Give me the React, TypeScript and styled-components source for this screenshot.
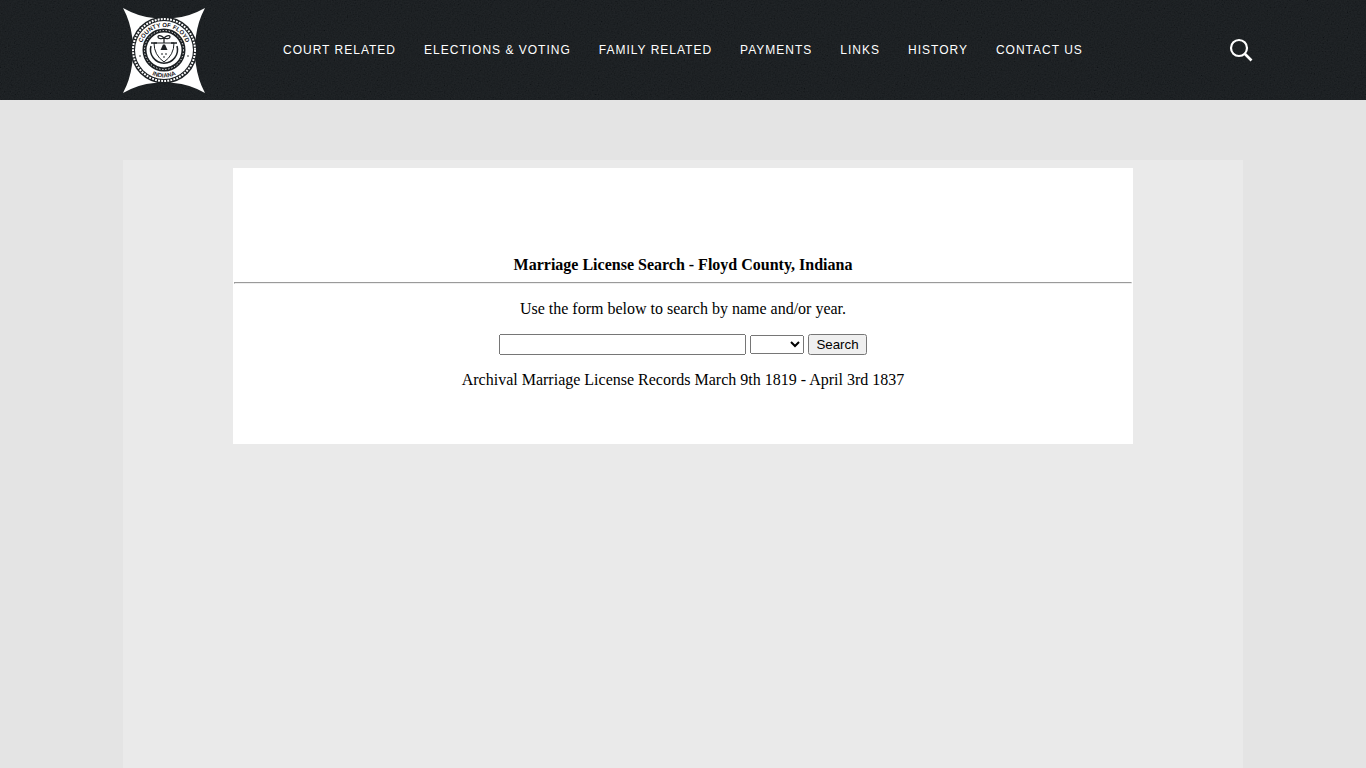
import React from 'react';
import styled, { createGlobalStyle } from 'styled-components';

const GlobalStyle = createGlobalStyle`
  *, *::before, *::after { box-sizing: border-box; }
  body {
    margin: 0;
    background: #e4e4e4;
    color: #000;
    font-family: "Liberation Serif", "Times New Roman", serif;
  }
`;

const Page = styled.div`
  display: flex;
  flex-direction: column;
  min-height: 100vh;
`;

const Header = styled.header`
  position: relative;
  background: #111518;
`;

const Grain = styled.svg`
  position: absolute;
  inset: 0;
  width: 100%;
  height: 100%;
  opacity: 0.07;
  pointer-events: none;
`;

const HeaderInner = styled.div`
  position: relative;
  display: flex;
  align-items: center;
  width: 100%;
  max-width: 1136px;
  height: 100px;
  margin: 0 auto;
  padding: 0 8px;
`;

const HomeLink = styled.a`
  display: block;
  flex: none;
  width: 82px;
  height: 86px;
  margin-right: 78px;

  svg { display: block; }
`;

const Nav = styled.nav`
  display: flex;
  gap: 28px;
  flex: 1;
`;

const NavLink = styled.a`
  color: #fff;
  font: 12px/16px "Liberation Sans", Arial, sans-serif;
  letter-spacing: 1px;
  text-transform: uppercase;
  text-decoration: none;
  white-space: nowrap;
`;

const SearchToggle = styled.button`
  display: flex;
  align-items: center;
  justify-content: center;
  width: 40px;
  height: 40px;
  margin-right: -18px;
  padding: 0;
  border: 0;
  background: none;
  color: #fff;
  cursor: pointer;
`;

const Main = styled.main`
  display: flex;
  flex: 1;
  width: 100%;
  max-width: 1120px;
  margin: 60px auto 0;
  padding: 8px;
  align-items: flex-start;
  justify-content: center;
  background: #eaeaea;
`;

const Card = styled.section`
  width: 100%;
  max-width: 900px;
  padding: 88px 1px 55px;
  background: #fff;
  text-align: center;
  font-size: 16px;
  line-height: 18px;
`;

const Title = styled.h1`
  margin: 0;
  font-size: 16px;
  line-height: 18px;
`;

const Rule = styled.hr`
  margin: 8px 0 16px;
`;

const Text = styled.p`
  margin: 0;
`;

const SearchForm = styled.form`
  display: flex;
  align-items: center;
  justify-content: center;
  gap: 4px;
  margin: 16px 0;
`;

const NameInput = styled.input`
  width: 247px;
  height: 21px;
`;

const YearSelect = styled.select`
  width: 54px;
  height: 19px;
`;

const SubmitButton = styled.button`
  height: 21px;
  padding: 1px 6px;
`;

const SealText = styled.text`
  font-family: "Liberation Sans", Arial, sans-serif;
  font-weight: 700;
  font-size: 6px;
  fill: #1c2023;
  text-anchor: middle;
`;

const links = [
  'Court Related',
  'Elections & Voting',
  'Family Related',
  'Payments',
  'Links',
  'History',
  'Contact Us',
];

const years = Array.from({ length: 19 }, (_, i) => 1819 + i);

function CountySeal() {
  return (
    <svg width="82" height="86" viewBox="0 0 82 86" fill="none">
      <path d="M0 1Q16 10 31 11Q41 12 51 11Q66 10 82 1Q75 14 73 29Q70 43 73 58Q75 73 82 86Q66 77 51 76Q41 75 31 76Q16 77 0 86Q7 73 9 58Q12 43 9 29Q7 14 0 1Z" fill="#fff" />
      <circle cx="41" cy="43" r="33.5" fill="#1c2023" />
      <circle cx="41" cy="43" r="31" stroke="#fff" strokeWidth="2" strokeDasharray="1.9 1.2" />
      <circle cx="41" cy="43" r="29" fill="#fff" />
      <circle cx="41" cy="43" r="19.5" stroke="#1c2023" strokeWidth="4" />
      <circle cx="41" cy="43" r="19.5" stroke="#fff" strokeWidth="1" strokeDasharray="1.3 1.8" />
      <path d="M28 39A13.5 13.5 0 1 0 54 39" stroke="#1c2023" strokeWidth="1.5" />
      <path d="M31 36H51Q51 48 41 55Q31 48 31 36Z" fill="#fff" stroke="#1c2023" strokeWidth="1" />
      <path d="M28 36H34M48 36H54" stroke="#1c2023" strokeWidth="1.5" />
      <path d="M41 31C38 28 35 28 35 30C35 32 39 32 41 31C43 32 47 32 47 30C47 28 44 28 41 31V36" stroke="#1c2023" strokeWidth="1.3" />
      <path d="M37.5 43L40 37.5H42L44.5 43Z" fill="#1c2023" />
      <path d="M38 47H40M42 47H44M40 50H42" stroke="#1c2023" strokeWidth="1" />
      <circle cx="17" cy="49" r="0.8" fill="#1c2023" />
      <circle cx="65" cy="49" r="0.8" fill="#1c2023" />
      <path id="seal-top" d="M18 43A23 23 0 0 1 64 43" />
      <path id="seal-bottom" d="M13.5 43A27.5 27.5 0 0 0 68.5 43" />
      <SealText>
        <textPath href="#seal-top" startOffset="50%">COUNTY OF FLOYD</textPath>
      </SealText>
      <SealText>
        <textPath href="#seal-bottom" startOffset="50%">INDIANA</textPath>
      </SealText>
    </svg>
  );
}

export default function App() {
  return (
    <Page>
      <GlobalStyle />
      <Header>
        <Grain aria-hidden="true">
          <filter id="grain">
            <feTurbulence type="fractalNoise" baseFrequency="0.7" numOctaves="2" />
            <feColorMatrix type="matrix" values="0.9 0.9 0 0 -0.4  0.9 0.9 0 0 -0.4  0.9 0.9 0 0 -0.4  0 0 0 0 1" />
          </filter>
          <rect width="100%" height="100%" filter="url(#grain)" />
        </Grain>
        <HeaderInner>
          <HomeLink href="#" aria-label="Floyd County home">
            <CountySeal />
          </HomeLink>
          <Nav>
            {links.map((label) => (
              <NavLink key={label} href="#">{label}</NavLink>
            ))}
          </Nav>
          <SearchToggle type="button" aria-label="Search site">
            <svg width="24" height="24" viewBox="0 0 24 24" fill="none" stroke="currentColor">
              <circle cx="10" cy="10" r="8" strokeWidth="2.2" />
              <path d="M16 16L22.5 22.5" strokeWidth="2.6" />
            </svg>
          </SearchToggle>
        </HeaderInner>
      </Header>
      <Main>
        <Card>
          <Title>Marriage License Search - Floyd County, Indiana</Title>
          <Rule />
          <Text>Use the form below to search by name and/or year.</Text>
          <SearchForm onSubmit={(event) => event.preventDefault()}>
            <NameInput type="text" name="name" aria-label="Name" />
            <YearSelect name="year" aria-label="Year" defaultValue="">
              <option value="" />
              {years.map((year) => (
                <option key={year} value={year}>{year}</option>
              ))}
            </YearSelect>
            <SubmitButton type="submit">Search</SubmitButton>
          </SearchForm>
          <Text>Archival Marriage License Records March 9th 1819 - April 3rd 1837</Text>
        </Card>
      </Main>
    </Page>
  );
}
